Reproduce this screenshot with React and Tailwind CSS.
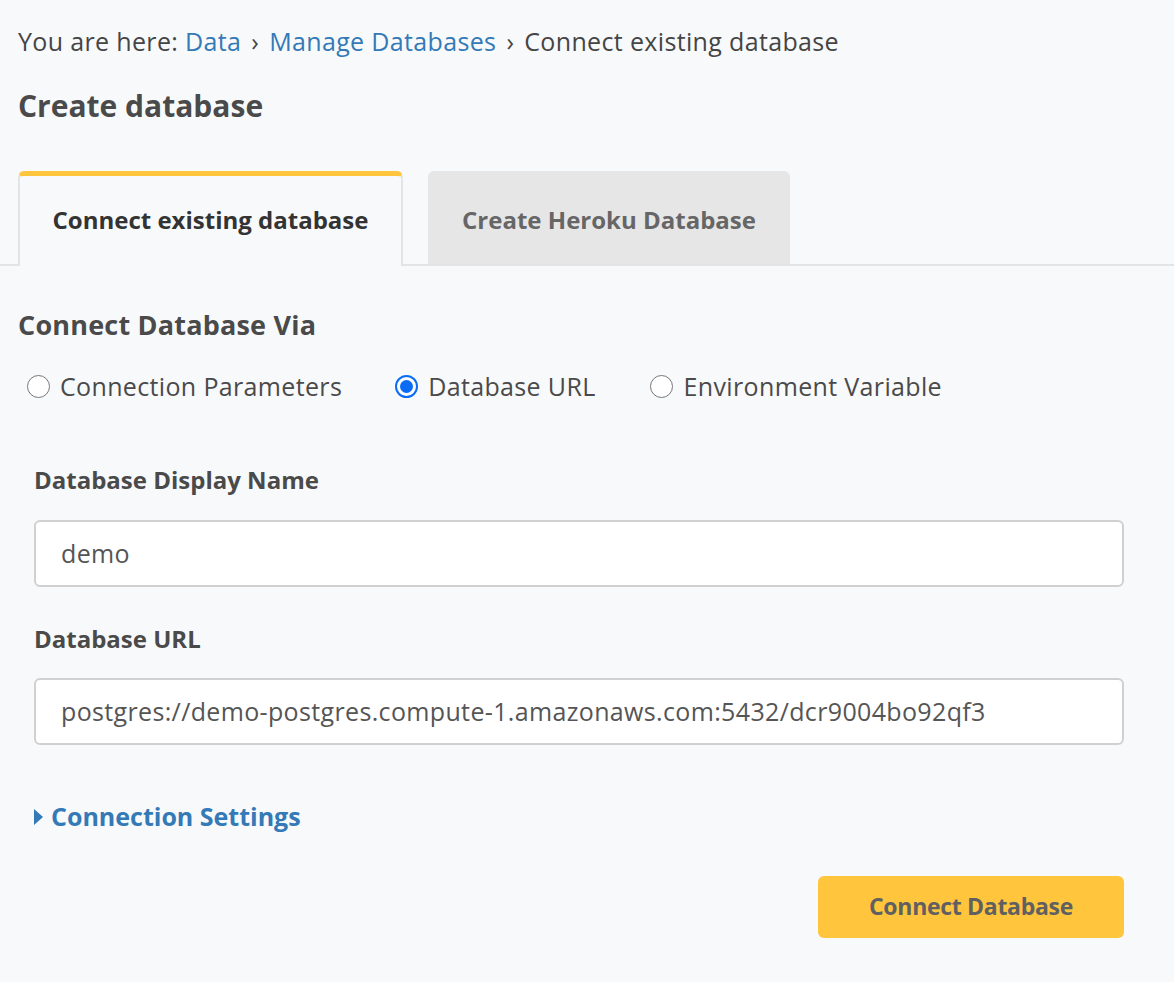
export default function App() {
  return (
    <div className="min-h-[982px] w-[1174px] bg-[#f8f9fb] text-[#4a4a4a]" style={{ fontFamily: '"Open Sans", Lato, sans-serif' }}>
      <div className="px-[18px] pt-[24px]">
        <div className="text-[25px] leading-[34px] tracking-[0.35px] text-[#454545]">
          You are here: <span className="text-[#337ab7]">Data</span>
          <span className="mx-[10px]">›</span>
          <span className="text-[#337ab7]">Manage Databases</span>
          <span className="mx-[10px]">›</span>
          Connect existing database
        </div>
        <h1 className="mt-[28px] text-[30px] leading-[40px] font-bold text-[#4a4a4a]">Create database</h1>
      </div>

      {/* Tabs */}
      <div className="mt-[45px] flex items-end gap-[25px] border-b-2 border-[#e3e4e6] pl-[18px]">
        <div className="-mb-[2px] flex h-[95px] w-[385px] items-center justify-center rounded-t-[6px] border-x-2 border-t-[5px] border-x-[#e3e4e6] border-t-[#ffc53d] bg-[#f8f9fb] pb-[3px] text-[24px] font-bold text-[#333]">
          Connect existing database
        </div>
        <div className="flex h-[93px] w-[362px] items-center justify-center rounded-t-[6px] bg-[#e6e6e6] pt-[4px] text-[24px] font-bold text-[#666]">
          Create Heroku Database
        </div>
      </div>

      <div className="px-[18px]">
        <h2 className="mt-[41px] text-[27px] leading-[36px] font-bold tracking-[0.2px] text-[#4a4a4a]">Connect Database Via</h2>
        <div className="mt-[25px] flex items-center text-[25px] leading-[36px] tracking-[0.35px] text-[#4a4a4a]">
          <label className="flex items-center pl-[9px]">
            <span className="h-[23px] w-[23px] rounded-full border-[1.5px] border-[#777] bg-white" />
            <span className="ml-[10px]">Connection Parameters</span>
          </label>
          <label className="ml-[53px] flex items-center">
            <span className="flex h-[23px] w-[23px] items-center justify-center rounded-full border-2 border-[#0a6cf5] bg-white">
              <span className="h-[13px] w-[13px] rounded-full bg-[#0a6cf5]" />
            </span>
            <span className="ml-[10px]">Database URL</span>
          </label>
          <label className="ml-[54px] flex items-center">
            <span className="h-[23px] w-[23px] rounded-full border-[1.5px] border-[#777] bg-white" />
            <span className="ml-[11px]">Environment Variable</span>
          </label>
        </div>

        {/* Form */}
        <div className="pl-[16px] pr-[32px]">
          <div className="mt-[60px] text-[24px] leading-[32px] font-bold text-[#4a4a4a]">Database Display Name</div>
          <div className="mt-[24px] flex h-[67px] items-center rounded-[6px] border-2 border-[#d0d0d0] bg-white px-[25px] text-[25px] tracking-[0.35px] text-[#555]">
            demo
          </div>

          <div className="mt-[36px] text-[24px] leading-[32px] font-bold text-[#4a4a4a]">Database URL</div>
          <div className="mt-[23px] flex h-[67px] items-center rounded-[6px] border-2 border-[#d0d0d0] bg-white px-[25px] text-[25px] tracking-[0.35px] text-[#555]">
            postgres://demo-postgres.compute-1.amazonaws.com:5432/dcr9004bo92qf3
          </div>

          <div className="mt-[53px] flex items-center text-[25px] font-bold text-[#337ab7]">
            <svg width="9" height="16" viewBox="0 0 9 16" className="mr-[8px]">
              <path d="M0 0 L9 8 L0 16 Z" fill="#337ab7" />
            </svg>
            Connection Settings
          </div>

          <div className="mt-[40px] flex justify-end">
            <button className="h-[62px] w-[306px] rounded-[6px] bg-[#ffc53d] text-[23px] font-bold tracking-[-0.3px] text-[#606060]">
              Connect Database
            </button>
          </div>
        </div>
      </div>
    </div>
  )
}
